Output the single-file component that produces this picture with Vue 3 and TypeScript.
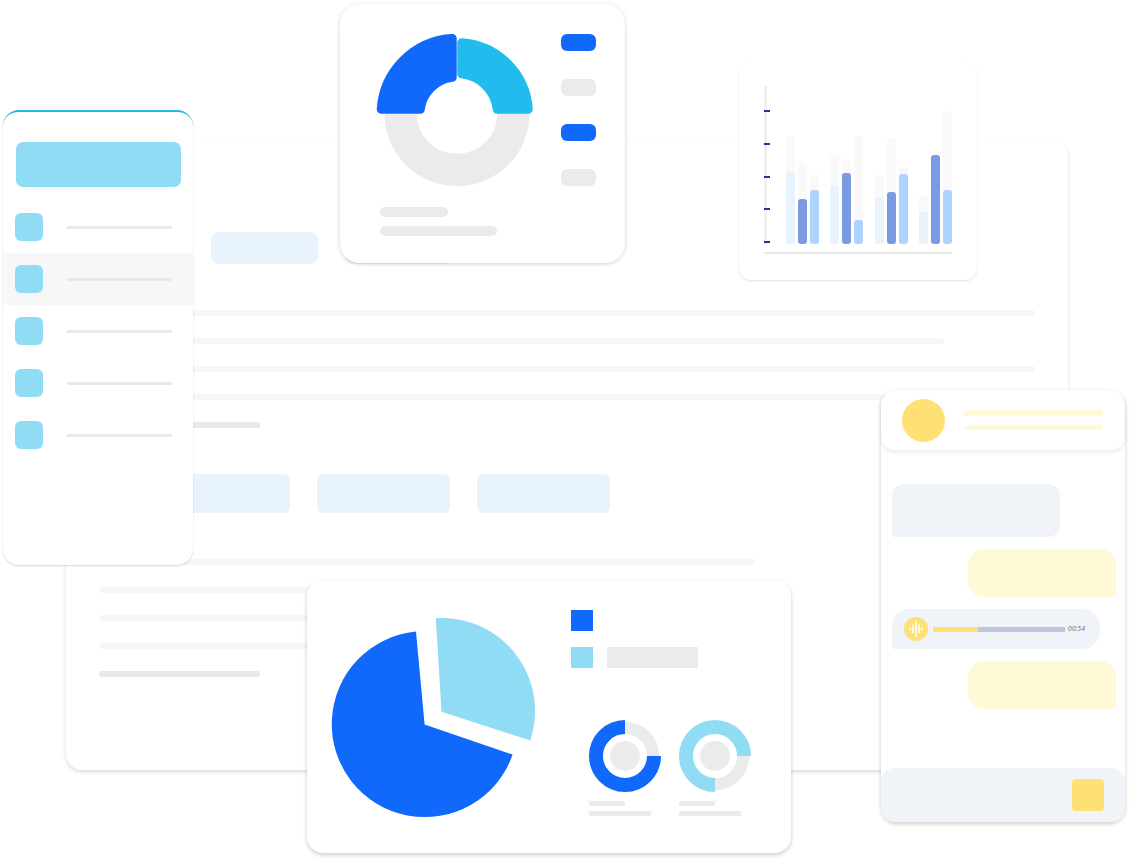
<script setup lang="ts">
interface Bar {
  track: number
  value: number
}

const menu: string[] = ['Overview', 'Reports', 'Customers', 'Messages', 'Settings']
const activeItem = 'Reports'

const barGroups: Bar[][] = [
  [{ track: 108, value: 72 }, { track: 81, value: 45 }, { track: 69, value: 54 }],
  [{ track: 88, value: 58 }, { track: 85, value: 71 }, { track: 108, value: 24 }],
  [{ track: 69, value: 46 }, { track: 106, value: 52 }, { track: 77, value: 70 }],
  [{ track: 48, value: 32 }, { track: 89, value: 89 }, { track: 133, value: 54 }],
]
</script>

<template>
  <main class="stage">
    <section class="panel document">
      <div class="tags"><span class="tag"></span><span class="tag"></span></div>
      <div class="lines">
        <i class="line"></i>
        <i class="line line-long"></i>
        <i class="line"></i>
        <i class="line"></i>
        <i class="line line-short"></i>
      </div>
      <div class="tiles"><span class="tile"></span><span class="tile"></span><span class="tile"></span></div>
      <div class="lines">
        <i class="line line-mid"></i>
        <i class="line line-mid"></i>
        <i class="line line-mid"></i>
        <i class="line line-mid"></i>
        <i class="line line-short"></i>
      </div>
    </section>

    <nav class="panel sidebar">
      <div class="brand"></div>
      <a
        v-for="item in menu"
        :key="item"
        href="#"
        class="menu-item"
        :class="{ active: item === activeItem }"
        :aria-label="item"
      >
        <span class="menu-icon"></span>
        <span class="menu-line"></span>
      </a>
    </nav>

    <section class="panel donut-card">
      <div class="donut-row">
        <svg class="donut" viewBox="376 34 158 152" aria-hidden="true">
          <path d="M384.4 113.5A72.6 72.6 0 0 0 529.6 113.5H497.4A40.4 40.4 0 0 1 416.6 113.5Z" fill="#ebebeb" />
          <path d="M452.2 38.4A75.8 75.8 0 0 0 381.2 109.2H420.3A37 37 0 0 1 452.2 77.3Z" fill="#1169fb" stroke="#1169fb" stroke-width="9" stroke-linejoin="round" />
          <path d="M461.7 42.7A71.5 71.5 0 0 1 528.3 109.2H497.2A40.5 40.5 0 0 0 461.7 73.8Z" fill="#22bbee" stroke="#22bbee" stroke-width="9" stroke-linejoin="round" />
        </svg>
        <div class="pills">
          <span class="pill blue"></span>
          <span class="pill"></span>
          <span class="pill blue"></span>
          <span class="pill"></span>
        </div>
      </div>
      <div class="caption">
        <i class="caption-line caption-small"></i>
        <i class="caption-line"></i>
      </div>
    </section>

    <section class="panel bars-card">
      <div class="plot">
        <div class="axis"><i v-for="n in 5" :key="n" class="tick"></i></div>
        <div class="groups">
          <div v-for="(group, g) in barGroups" :key="g" class="group">
            <div v-for="(bar, b) in group" :key="b" class="track" :style="{ height: bar.track + 'px' }">
              <div class="bar" :style="{ height: bar.value + 'px' }"></div>
            </div>
          </div>
        </div>
      </div>
      <div class="baseline"></div>
    </section>

    <section class="panel pie-card">
      <svg class="pie" viewBox="331 618 204 201" aria-hidden="true">
        <path d="M424.6 724.5L416 631.5A93 93 0 1 0 512.6 754.6Z" fill="#1169fb" />
        <path d="M441.5 711.7L435.8 618.2A93 93 0 0 1 530.2 740.6Z" fill="#90dcf4" />
      </svg>
      <div class="pie-side">
        <div class="legend">
          <span class="swatch swatch-blue"></span>
          <span></span>
          <span class="swatch"></span>
          <span class="legend-bar"></span>
        </div>
        <div class="rings">
          <div class="ring-item">
            <svg class="ring" viewBox="0 0 72 72" aria-hidden="true">
              <path d="M36 7.8A28.2 28.2 0 0 1 64.2 36" fill="none" stroke="#ebebeb" stroke-width="12" />
              <path d="M36 7A29 29 0 1 0 65 36" fill="none" stroke="#1169fb" stroke-width="14" />
              <circle cx="36" cy="36" r="15" fill="#ebebeb" />
            </svg>
            <i class="ring-line ring-line-short"></i>
            <i class="ring-line"></i>
          </div>
          <div class="ring-item">
            <svg class="ring" viewBox="0 0 72 72" aria-hidden="true">
              <path d="M64.2 36A28.2 28.2 0 0 1 36 64.2" fill="none" stroke="#ebebeb" stroke-width="12" />
              <path d="M65 36A29 29 0 1 0 36 65" fill="none" stroke="#90dcf4" stroke-width="14" />
              <circle cx="36" cy="36" r="15" fill="#ebebeb" />
            </svg>
            <i class="ring-line ring-line-short"></i>
            <i class="ring-line"></i>
          </div>
        </div>
      </div>
    </section>

    <section class="panel chat">
      <header class="chat-head">
        <span class="avatar"></span>
        <div class="chat-title">
          <i class="title-line"></i>
          <i class="title-line title-thin"></i>
        </div>
      </header>
      <div class="messages">
        <div class="bubble received"></div>
        <div class="bubble sent"></div>
        <div class="bubble audio">
          <button class="play" type="button" aria-label="Play">
            <svg viewBox="0 0 24 24" aria-hidden="true">
              <path d="M6 11v2M9 8v8M12 4.500v15M15 8v8M18 11v2" fill="none" stroke="#fff" stroke-width="1.500" stroke-linecap="round" />
            </svg>
          </button>
          <input class="seek" type="range" min="0" max="100" value="34" aria-label="Position" />
          <time class="time">00:54</time>
        </div>
        <div class="bubble sent"></div>
      </div>
      <footer class="chat-foot">
        <button class="send" type="button" aria-label="Send"></button>
      </footer>
    </section>
  </main>
</template>

<style>
body {
  margin: 0;
  background: #fff;
}
</style>

<style scoped>
* {
  box-sizing: border-box;
}

.stage {
  position: relative;
  min-height: 862px;
  padding: 140px 63px 92px 66px;
  overflow: hidden;
  font-family: "Open Sans", "Noto Sans", sans-serif;
}

.panel {
  background: #fff;
  border-radius: 16px;
  box-shadow: 0 2px 4px rgba(0, 0, 0, 0.2);
}

.document {
  padding: 92px 33px 93px;
  box-shadow: 0 2px 4px rgba(0, 0, 0, 0.14);
}

.tags {
  display: flex;
  gap: 27px;
  margin: 0 0 46px 112px;
}

.tag {
  width: 107px;
  height: 32px;
  border-radius: 8px;
  background: #e8f3fe;
}

.lines {
  display: flex;
  flex-direction: column;
  gap: 22px;
}

.line {
  height: 6px;
  border-radius: 3px;
  background: #f6f6f6;
}

.line-long {
  width: 845px;
  max-width: 100%;
}

.line-mid {
  width: 656px;
  max-width: 100%;
}

.line-short {
  width: 161px;
  background: #e9e9e9;
}

.tiles {
  display: flex;
  gap: 27px;
  margin: 46px 0 46px 58px;
}

.tile {
  width: 133px;
  height: 39px;
  border-radius: 6px;
  background: #e8f3fe;
}

.sidebar {
  position: absolute;
  left: 3px;
  top: 110px;
  width: 190px;
  padding: 30px 0 104px;
  border-top: 2px solid #22b8ea;
  box-shadow: 0 1px 2px rgba(0, 0, 0, 0.16);
}

.brand {
  height: 45px;
  margin: 0 12px 14px 13px;
  border-radius: 7px;
  background: #90dcf4;
}

.menu-item {
  display: flex;
  align-items: center;
  gap: 24px;
  height: 52px;
  padding: 0 21px 0 12px;
}

.menu-item.active {
  background: #f7f7f7;
}

.menu-icon {
  width: 28px;
  height: 28px;
  border-radius: 6px;
  background: #90dcf4;
}

.menu-line {
  flex: 1;
  height: 3px;
  border-radius: 1px;
  background: #e9e9e9;
}

.donut-card {
  position: absolute;
  left: 340px;
  top: 4px;
  padding: 30px 29px 27px 36px;
  border-radius: 20px;
  box-shadow: 0 1px 4px rgba(0, 0, 0, 0.18);
}

.donut-row {
  display: flex;
  gap: 27px;
}

.donut {
  width: 158px;
  height: 152px;
}

.pills {
  display: flex;
  flex-direction: column;
  gap: 28px;
}

.pill {
  width: 35px;
  height: 17px;
  border-radius: 6px;
  background: #ebebeb;
}

.pill.blue {
  background: #1169fb;
}

.caption {
  display: flex;
  flex-direction: column;
  gap: 9px;
  margin: 21px 0 0 4px;
}

.caption-line {
  width: 117px;
  height: 10px;
  border-radius: 5px;
  background: #ebebeb;
}

.caption-small {
  width: 68px;
}

.bars-card {
  position: absolute;
  right: 154px;
  top: 63px;
  width: 238px;
  padding: 23px 25px 26px;
  border-radius: 12px;
  box-shadow: 0 1px 2px rgba(0, 0, 0, 0.12);
}

.plot {
  display: flex;
  gap: 19px;
  height: 158px;
}

.axis {
  display: flex;
  flex-direction: column;
  justify-content: space-between;
  width: 3px;
  padding: 24px 0 1px;
  background: #efefef;
}

.tick {
  width: 6px;
  height: 2px;
  background: #22359f;
}

.groups {
  flex: 1;
  display: flex;
  justify-content: space-between;
}

.group {
  display: flex;
  align-items: flex-end;
  gap: 3px;
}

.track {
  display: flex;
  align-items: flex-end;
  width: 9px;
  border-radius: 3px;
  background: #f9f9f9;
}

.bar {
  width: 100%;
  border-radius: 3px;
  background: #e8f3fe;
}

.track:nth-child(2) .bar {
  background: #7a9ae2;
}

.track:nth-child(3) .bar {
  background: #aed3ff;
}

.baseline {
  height: 2px;
  margin-top: 8px;
  background: #e9e9e9;
}

.pie-card {
  position: absolute;
  left: 307px;
  top: 580px;
  display: flex;
  gap: 36px;
  padding: 30px 40px 34px 24px;
}

.pie {
  width: 204px;
  height: 201px;
  margin-top: 8px;
}

.pie-side {
  width: 180px;
}

.legend {
  display: grid;
  grid-template-columns: 22px 91px;
  grid-auto-rows: 21px;
  gap: 16px 14px;
}

.swatch {
  background: #90dcf4;
}

.swatch-blue {
  background: #1169fb;
}

.legend-bar {
  background: #ebebeb;
}

.rings {
  display: flex;
  gap: 18px;
  margin: 52px 0 0 18px;
}

.ring-item {
  display: flex;
  flex-direction: column;
  gap: 5px;
}

.ring {
  width: 72px;
  height: 72px;
  margin-bottom: 4px;
}

.ring-line {
  width: 62px;
  height: 5px;
  background: #ebebeb;
}

.ring-line-short {
  width: 36px;
}

.chat {
  position: absolute;
  right: 6px;
  top: 390px;
  width: 244px;
}

.chat-head {
  display: flex;
  align-items: center;
  gap: 19px;
  height: 60px;
  padding: 0 22px 0 21px;
  border-radius: 14px;
  box-shadow: 0 2px 4px rgba(0, 0, 0, 0.09);
}

.avatar {
  width: 43px;
  height: 43px;
  border-radius: 50%;
  background: #ffe074;
}

.chat-title {
  flex: 1;
  display: flex;
  flex-direction: column;
  gap: 9px;
}

.title-line {
  height: 6px;
  border-radius: 2px;
  background: #fefad6;
}

.title-thin {
  height: 5px;
}

.messages {
  display: flex;
  flex-direction: column;
  gap: 12px;
  padding: 34px 9px 59px 11px;
}

.bubble {
  background: #f0f3f7;
}

.received {
  width: 168px;
  height: 53px;
  border-radius: 12px 12px 12px 2px;
}

.sent {
  align-self: flex-end;
  width: 148px;
  height: 48px;
  border-radius: 16px 16px 2px 16px;
  background: #fefad6;
}

.audio {
  display: flex;
  align-items: center;
  width: 208px;
  height: 40px;
  padding: 0 15px 0 12px;
  border-radius: 16px 18px 18px 2px;
}

.play {
  width: 24px;
  height: 24px;
  padding: 0;
  border: 0;
  border-radius: 50%;
  background: #ffe074;
}

.play svg {
  display: block;
}

.seek {
  flex: 1;
  min-width: 0;
  height: 5px;
  margin: 0 3px 0 5px;
  appearance: none;
  background: linear-gradient(to right, #ffe074 34%, #bfc4df 34%);
}

.seek::-webkit-slider-thumb {
  appearance: none;
  width: 1px;
  height: 5px;
}

.time {
  color: #6f7379;
  font-size: 7px;
  font-style: italic;
  line-height: 10px;
}

.chat-foot {
  display: flex;
  align-items: center;
  justify-content: flex-end;
  height: 54px;
  padding-right: 21px;
  border-radius: 14px;
  background: #f0f3f7;
}

.send {
  width: 32px;
  height: 32px;
  padding: 0;
  border: 0;
  border-radius: 4px;
  background: #ffe074;
}
</style>
